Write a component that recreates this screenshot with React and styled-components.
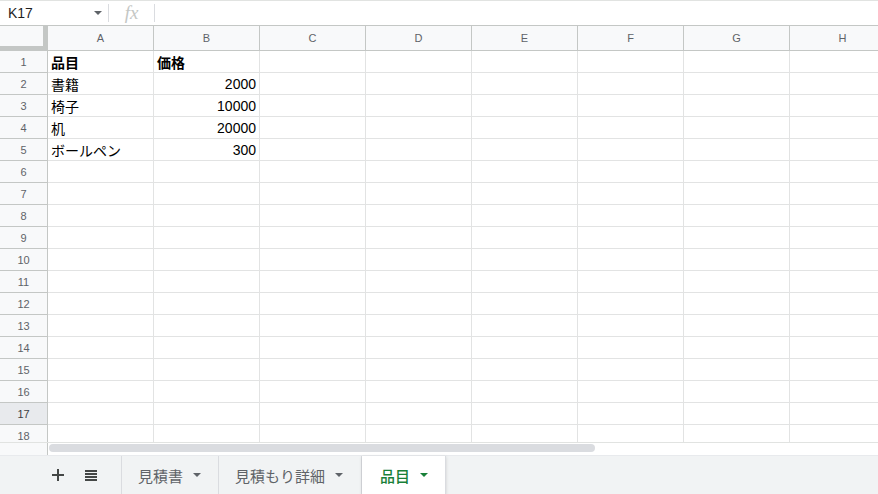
import React from "react"
import styled, { createGlobalStyle } from "styled-components"

const Global = createGlobalStyle`
  html, body { margin: 0; padding: 0; background: #fff; }
  body { font-family: "Liberation Sans", Arial, "Noto Sans CJK JP", sans-serif; }
  * { box-sizing: border-box; }
`

const Page = styled.div`
  width: 878px;
  height: 494px;
  overflow: hidden;
  display: flex;
  flex-direction: column;
`

const FormulaBar = styled.div`
  height: 26px;
  flex: none;
  display: flex;
  align-items: center;
  border-top: 1px solid #e1e3e1;
  border-bottom: 1px solid #c4c7c5;
`

const NameBox = styled.div`
  width: 108px;
  height: 100%;
  display: flex;
  align-items: center;
  justify-content: space-between;
  padding: 0 6px 0 8px;
  font-size: 14px;
  color: #1f1f1f;
`

const Caret = styled.span`
  width: 0;
  height: 0;
  border-left: 4px solid transparent;
  border-right: 4px solid transparent;
  border-top: 4px solid ${p => p.color || "#5f6368"};
`

const Divider = styled.span`
  width: 1px;
  height: 18px;
  background: #dadce0;
`

const Fx = styled.span`
  width: 45px;
  text-align: center;
  font-family: "Liberation Serif", serif;
  font-style: italic;
  font-size: 19px;
  color: #c4c7c5;
  line-height: 1;
  padding-bottom: 2px;
`

const Sheet = styled.div`
  height: 416px;
  flex: none;
  overflow: hidden;
`

const Row = styled.div`
  display: grid;
  grid-template-columns: 48px repeat(8, 106px);
  height: ${p => (p.header ? "25px" : "22px")};
`

const Corner = styled.div`
  background: #f8f9fa;
  border-right: 1px solid #c4c7c5;
  border-bottom: 1px solid #c4c7c5;
  box-shadow: inset -4px -4px 0 #c4c7c5;
`

const ColHead = styled.div`
  background: #f8f9fa;
  border-right: 1px solid #c4c7c5;
  border-bottom: 1px solid #c4c7c5;
  display: flex;
  align-items: center;
  justify-content: center;
  font-size: 11px;
  color: #5f6368;
`

const RowHead = styled.div`
  background: ${p => (p.active ? "#e8eaed" : "#f8f9fa")};
  border-right: 1px solid #c4c7c5;
  border-bottom: 1px solid #c4c7c5;
  display: flex;
  align-items: center;
  justify-content: center;
  font-size: 11px;
  color: ${p => (p.active ? "#3c4043" : "#5f6368")};
`

const Cell = styled.div`
  border-right: 1px solid #e2e3e3;
  border-bottom: 1px solid #e2e3e3;
  display: flex;
  align-items: center;
  justify-content: ${p => (p.right ? "flex-end" : "flex-start")};
  padding: 0 3px;
  font-size: 14px;
  font-weight: ${p => (p.bold ? 700 : 400)};
  color: #000;
  white-space: nowrap;
  overflow: hidden;
`

const ScrollRow = styled.div`
  height: 13px;
  flex: none;
  display: flex;
  border-top: 1px solid #e1e3e1;
`

const ScrollGutter = styled.div`
  width: 48px;
  background: #f8f9fa;
  border-right: 1px solid #c4c7c5;
`

const Track = styled.div`
  flex: 1;
  padding: 1px 0 0 1px;
`

const Thumb = styled.div`
  width: 546px;
  height: 8px;
  border-radius: 4px;
  background: #dadce0;
`

const TabBar = styled.div`
  height: 39px;
  flex: none;
  display: flex;
  align-items: stretch;
  background: #f1f3f4;
  border-top: 1px solid #e8eaed;
`

const Tools = styled.div`
  width: 122px;
  display: flex;
  align-items: center;
  padding-left: 50px;
  gap: 17px;
  border-right: 1px solid #dadce0;
`

const IconBtn = styled.span`
  width: 16px;
  height: 16px;
  display: flex;
  align-items: center;
  justify-content: center;
`

const Tab = styled.div`
  display: flex;
  align-items: center;
  gap: 10px;
  padding: 0 16px 0 ${p => (p.active ? 18 : 16)}px;
  width: ${p => p.w}px;
  font-size: 15px;
  color: ${p => (p.active ? "#188038" : "#5f6368")};
  background: ${p => (p.active ? "#fff" : "transparent")};
  border-right: 1px solid #dadce0;
  box-shadow: ${p => (p.active ? "0 1px 3px rgba(60,64,67,0.2)" : "none")};
  font-family: "Noto Sans CJK JP", "Liberation Sans", sans-serif;
  font-weight: ${p => (p.active ? 500 : 400)};
`

const cols = ["A", "B", "C", "D", "E", "F", "G", "H"]
const data = [
  ["品目", "価格", true],
  ["書籍", "2000"],
  ["椅子", "10000"],
  ["机", "20000"],
  ["ボールペン", "300"],
]

export default function App() {
  const rows = Array.from({ length: 18 }, (_, i) => i + 1)
  return (
    <Page>
      <Global />
      <FormulaBar>
        <NameBox>
          K17
          <Caret />
        </NameBox>
        <Divider />
        <Fx>fx</Fx>
        <Divider />
      </FormulaBar>
      <Sheet>
        <Row header>
          <Corner />
          {cols.map(c => (
            <ColHead key={c}>{c}</ColHead>
          ))}
        </Row>
        {rows.map(n => {
          const d = data[n - 1]
          return (
            <Row key={n}>
              <RowHead active={n === 17}>{n}</RowHead>
              {cols.map((c, i) => {
                if (d && i === 0) return <Cell key={c} bold={d[2]}>{d[0]}</Cell>
                if (d && i === 1)
                  return (
                    <Cell key={c} bold={d[2]} right={!d[2]}>
                      {d[1]}
                    </Cell>
                  )
                return <Cell key={c} />
              })}
            </Row>
          )
        })}
      </Sheet>
      <ScrollRow>
        <ScrollGutter />
        <Track>
          <Thumb />
        </Track>
      </ScrollRow>
      <TabBar>
        <Tools>
          <IconBtn>
            <svg width="14" height="14" viewBox="0 0 14 14">
              <path d="M6 1h2v5h5v2H8v5H6V8H1V6h5z" fill="#444746" />
            </svg>
          </IconBtn>
          <IconBtn>
            <svg width="14" height="14" viewBox="0 0 14 14">
              <path d="M1 2h12v2H1zM1 5h12v2H1zM1 8h12v2H1zM1 11h12v2H1z" fill="#444746" />
            </svg>
          </IconBtn>
        </Tools>
        <Tab w={97}>
          見積書
          <Caret />
        </Tab>
        <Tab w={143}>
          見積もり詳細
          <Caret />
        </Tab>
        <Tab w={84} active>
          品目
          <Caret color="#188038" />
        </Tab>
      </TabBar>
    </Page>
  )
}
